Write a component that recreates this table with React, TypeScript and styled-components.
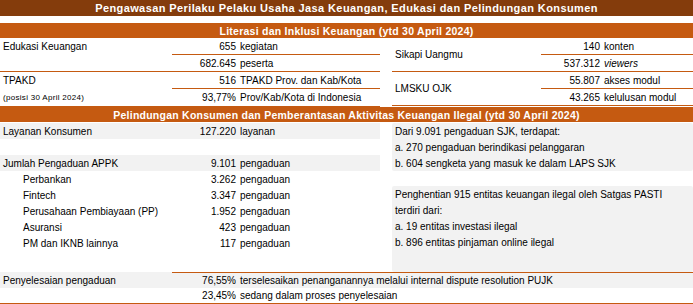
import React from "react";
import styled, { createGlobalStyle } from "styled-components";

const colors = {
  brown: "#843c0c",
  orange: "#c55a11",
  shade: "#f2f2f2",
  text: "#000000",
};

const GlobalStyle = createGlobalStyle`
  html, body {
    margin: 0;
    padding: 0;
    background: #ffffff;
  }
  body {
    font-family: "Liberation Sans", Arial, sans-serif;
    font-size: 10px;
    color: ${colors.text};
  }
`;

const Page = styled.div`
  width: 693px;
  display: flex;
  flex-direction: column;
`;

const TitleBar = styled.div`
  height: 16px;
  margin-bottom: 7px;
  background: ${colors.brown};
  color: #ffffff;
  font-size: 11px;
  font-weight: 700;
  letter-spacing: 0.4px;
  display: flex;
  align-items: center;
  justify-content: center;
`;

const SectionBar = styled.div`
  height: 15px;
  background: ${colors.orange};
  color: #ffffff;
  font-size: 10.5px;
  font-weight: 700;
  letter-spacing: 0.25px;
  display: flex;
  align-items: center;
  justify-content: center;
`;

const Split = styled.div<{ $padTop?: number; $height?: number }>`
  display: grid;
  grid-template-columns: 380px 301px;
  column-gap: 12px;
  padding-top: ${(p) => p.$padTop ?? 0}px;
  height: ${(p) => (p.$height ? `${p.$height}px` : "auto")};
  box-sizing: border-box;
`;

/* ---------- section 1 tables ---------- */

const Group = styled.div<{ $labelWidth: number }>`
  display: grid;
  grid-template-columns: ${(p) => p.$labelWidth}px 1fr;
  border-bottom: 1px solid ${colors.orange};
`;

const GroupLabel = styled.div<{ $center?: boolean }>`
  display: flex;
  flex-direction: column;
  justify-content: ${(p) => (p.$center ? "center" : "flex-start")};
  padding-left: 3px;
`;

const LabelLine = styled.div<{ $small?: boolean }>`
  height: 17px;
  display: flex;
  align-items: center;
  font-size: ${(p) => (p.$small ? "8px" : "10px")};
  letter-spacing: ${(p) => (p.$small ? "0.3px" : "0")};
`;

const Values = styled.div`
  display: flex;
  flex-direction: column;
`;

const ValueRow = styled.div<{ $numWidth: number; $line?: boolean }>`
  height: 16px;
  display: grid;
  grid-template-columns: ${(p) => p.$numWidth}px 1fr;
  align-items: center;
  border-bottom: ${(p) => (p.$line ? `1px solid ${colors.orange}` : "none")};
`;

const Num = styled.span`
  text-align: right;
  white-space: nowrap;
`;

const Unit = styled.span<{ $italic?: boolean }>`
  padding-left: 4px;
  white-space: nowrap;
  font-style: ${(p) => (p.$italic ? "italic" : "normal")};
`;

/* ---------- section 2 ---------- */

const StatList = styled.div`
  display: flex;
  flex-direction: column;
`;

const StatRow = styled.div<{ $shade?: boolean }>`
  height: 16px;
  display: grid;
  grid-template-columns: 172px 64px 1fr;
  align-items: center;
  background: ${(p) => (p.$shade ? colors.shade : "transparent")};
`;

const StatLabel = styled.span<{ $indent?: boolean }>`
  padding-left: ${(p) => (p.$indent ? 23 : 3)}px;
  white-space: nowrap;
`;

const InfoColumn = styled.div`
  display: flex;
  flex-direction: column;
`;

const InfoBox = styled.div<{ $grow?: boolean; $gapTop?: number }>`
  background: ${colors.shade};
  border-radius: 2px;
  margin-top: ${(p) => p.$gapTop ?? 0}px;
  flex: ${(p) => (p.$grow ? 1 : "none")};
  display: flex;
  flex-direction: column;
  padding-left: 3px;
`;

const InfoLine = styled.div`
  height: 16px;
  display: flex;
  align-items: center;
  white-space: nowrap;
`;

const ResultBlock = styled.div`
  display: grid;
  grid-template-columns: 172px 1fr;
  border-bottom: 2px solid ${colors.orange};
`;

const ResultLabel = styled.div`
  height: 16px;
  padding-left: 3px;
  display: flex;
  align-items: center;
  background: ${colors.shade};
`;

const ResultList = styled.div`
  border-top: 1px solid ${colors.orange};
  display: flex;
  flex-direction: column;
`;

const ResultRow = styled.div<{ $shade?: boolean }>`
  height: 15px;
  display: grid;
  grid-template-columns: 64px 1fr;
  align-items: center;
  background: ${(p) => (p.$shade ? colors.shade : "transparent")};
`;

const appk = [
  { label: "Perbankan", value: "3.262" },
  { label: "Fintech", value: "3.347" },
  { label: "Perusahaan Pembiayaan (PP)", value: "1.952" },
  { label: "Asuransi", value: "423" },
  { label: "PM dan IKNB lainnya", value: "117" },
];

export default function App() {
  return (
    <Page>
      <GlobalStyle />
      <TitleBar>
        Pengawasan Perilaku Pelaku Usaha Jasa Keuangan, Edukasi dan Pelindungan Konsumen
      </TitleBar>

      <SectionBar>Literasi dan Inklusi Keuangan (ytd 30 April 2024)</SectionBar>
      <Split>
        <div>
          <Group $labelWidth={172}>
            <GroupLabel>
              <LabelLine>Edukasi Keuangan</LabelLine>
            </GroupLabel>
            <Values>
              <ValueRow $numWidth={64} $line>
                <Num>655</Num>
                <Unit>kegiatan</Unit>
              </ValueRow>
              <ValueRow $numWidth={64}>
                <Num>682.645</Num>
                <Unit>peserta</Unit>
              </ValueRow>
            </Values>
          </Group>
          <Group $labelWidth={172}>
            <GroupLabel>
              <LabelLine>TPAKD</LabelLine>
              <LabelLine $small>(posisi 30 April 2024)</LabelLine>
            </GroupLabel>
            <Values>
              <ValueRow $numWidth={64} $line>
                <Num>516</Num>
                <Unit>TPAKD Prov. dan Kab/Kota</Unit>
              </ValueRow>
              <ValueRow $numWidth={64}>
                <Num>93,77%</Num>
                <Unit>Prov/Kab/Kota di Indonesia</Unit>
              </ValueRow>
            </Values>
          </Group>
        </div>
        <div>
          <Group $labelWidth={149}>
            <GroupLabel $center>
              <LabelLine>Sikapi Uangmu</LabelLine>
            </GroupLabel>
            <Values>
              <ValueRow $numWidth={59} $line>
                <Num>140</Num>
                <Unit>konten</Unit>
              </ValueRow>
              <ValueRow $numWidth={59}>
                <Num>537.312</Num>
                <Unit $italic>viewers</Unit>
              </ValueRow>
            </Values>
          </Group>
          <Group $labelWidth={149}>
            <GroupLabel $center>
              <LabelLine>LMSKU OJK</LabelLine>
            </GroupLabel>
            <Values>
              <ValueRow $numWidth={59} $line>
                <Num>55.807</Num>
                <Unit>akses modul</Unit>
              </ValueRow>
              <ValueRow $numWidth={59}>
                <Num>43.265</Num>
                <Unit>kelulusan modul</Unit>
              </ValueRow>
            </Values>
          </Group>
        </div>
      </Split>

      <SectionBar>
        Pelindungan Konsumen dan Pemberantasan Aktivitas Keuangan Ilegal (ytd 30 April 2024)
      </SectionBar>
      <Split $padTop={1} $height={150}>
        <StatList>
          <StatRow $shade>
            <StatLabel>Layanan Konsumen</StatLabel>
            <Num>127.220</Num>
            <Unit>layanan</Unit>
          </StatRow>
          <StatRow />
          <StatRow $shade>
            <StatLabel>Jumlah Pengaduan APPK</StatLabel>
            <Num>9.101</Num>
            <Unit>pengaduan</Unit>
          </StatRow>
          {appk.map((row) => (
            <StatRow key={row.label}>
              <StatLabel $indent>{row.label}</StatLabel>
              <Num>{row.value}</Num>
              <Unit>pengaduan</Unit>
            </StatRow>
          ))}
        </StatList>
        <InfoColumn>
          <InfoBox>
            <InfoLine>Dari 9.091 pengaduan SJK, terdapat:</InfoLine>
            <InfoLine>a. 270 pengaduan berindikasi pelanggaran</InfoLine>
            <InfoLine>b. 604 sengketa yang masuk ke dalam LAPS SJK</InfoLine>
          </InfoBox>
          <InfoBox $grow $gapTop={15}>
            <InfoLine>Penghentian 915 entitas keuangan ilegal oleh Satgas PASTI</InfoLine>
            <InfoLine>terdiri dari:</InfoLine>
            <InfoLine>a. 19 entitas investasi ilegal</InfoLine>
            <InfoLine>b. 896 entitas pinjaman online ilegal</InfoLine>
          </InfoBox>
        </InfoColumn>
      </Split>

      <ResultBlock>
        <div>
          <ResultLabel>Penyelesaian pengaduan</ResultLabel>
        </div>
        <ResultList>
          <ResultRow $shade>
            <Num>76,55%</Num>
            <Unit>terselesaikan penanganannya melalui internal dispute resolution PUJK</Unit>
          </ResultRow>
          <ResultRow>
            <Num>23,45%</Num>
            <Unit>sedang dalam proses penyelesaian</Unit>
          </ResultRow>
        </ResultList>
      </ResultBlock>
    </Page>
  );
}
